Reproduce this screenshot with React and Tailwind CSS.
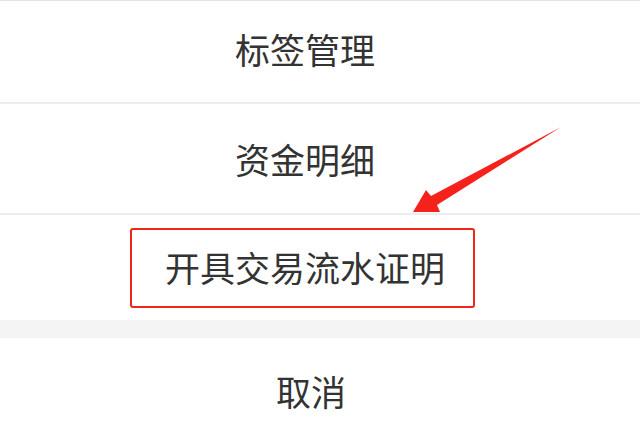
export default function App() {
  const font = { fontFamily: '"Noto Sans CJK SC", "Noto Sans", sans-serif' }

  return (
    <div className="relative w-[640px] h-[427px] overflow-hidden bg-white text-[#333333]" style={font}>
      <div className="h-[1px] bg-[#e4e4e4]" />

      <div className="h-[101px] flex items-center justify-center pr-[30px] pb-[6px] text-[35px] leading-none">
        标签管理
      </div>
      <div className="h-[2px] bg-[#ededed]" />

      <div className="h-[109px] flex items-center justify-center pr-[30px] text-[35px] leading-none">
        资金明细
      </div>
      <div className="h-[2px] bg-[#ededed]" />

      <div className="h-[105px] flex items-center">
        <div className="ml-[130px] w-[345px] h-[80px] flex items-center justify-center pl-[5px] pb-[3px] border-2 border-[#f0261c] rounded-[3px] text-[35px] leading-none">
          开具交易流水证明
        </div>
      </div>

      <div className="h-[18px] bg-[#f4f4f4]" />

      <div className="h-[108px] flex items-center justify-center pr-[18px] pb-[4px] text-[35px] leading-none">
        取消
      </div>

      <svg className="absolute left-0 top-0 pointer-events-none" width="640" height="427" viewBox="0 0 640 427">
        <polygon
          points="413,212 426,190 431,196 561,127 437,205 440,212"
          fill="#f5221b"
        />
      </svg>
    </div>
  )
}
